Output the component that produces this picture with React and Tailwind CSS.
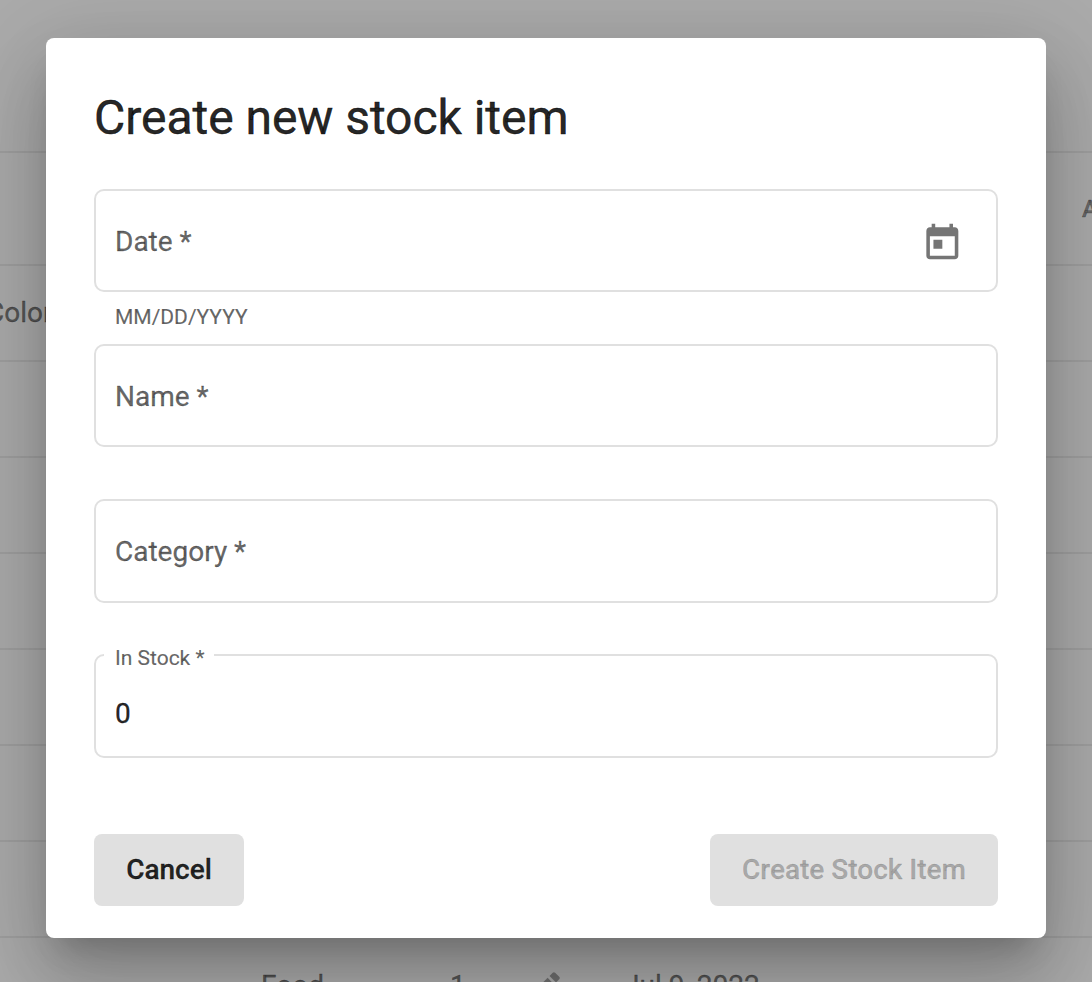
const middleRows = ["r2", "r3", "r4", "r5", "r6", "r7"];

function StockTable() {
  return (
    <div className="h-[982px] w-[1092px] overflow-hidden bg-[#fcfcfc] text-[28px] text-black/50">
      <div className="h-[153px] border-b-2 border-[#ebebeb]" />
      <div className="flex h-[113px] items-center justify-end border-b-2 border-[#ebebeb]">
        <span className="-mr-[6px] text-[24px] font-medium text-black/40 [-webkit-text-stroke:0.5px]">A</span>
      </div>
      <div className="flex h-24 items-center border-b-2 border-[#ebebeb] [-webkit-text-stroke:0.3px]">
        <span className="-ml-[14px]">Color</span>
      </div>
      {middleRows.map((row) => (
        <div key={row} className="h-24 border-b-2 border-[#ebebeb]" />
      ))}
      <div className="grid h-24 grid-cols-[189px_73px_101px_200px] items-center pl-[261px] [-webkit-text-stroke:0.3px]">
        <span>Food</span>
        <span>1</span>
        <svg viewBox="0 0 24 24" className="mt-[3px] h-[42px] w-[42px] fill-black/35 [-webkit-text-stroke:0]">
          <path d="M3 17.25V21h3.75L17.81 9.94l-3.75-3.75L3 17.25zM20.71 7.04c.39-.39.39-1.02 0-1.41l-2.34-2.34a.996.996 0 0 0-1.41 0l-1.83 1.83 3.75 3.75 1.83-1.83z" />
        </svg>
        <span>Jul 9, 2022</span>
      </div>
    </div>
  );
}

function Field({ label, tall, children }) {
  return (
    <div className={`flex items-center justify-between rounded-[10px] border-2 border-[#e0e0e0] pl-[19px] pr-[32.5px] ${tall ? "h-[104px] pt-px" : "h-[103px] pt-[2px]"}`}>
      <span className="text-[28px] leading-8 text-black/60 [-webkit-text-stroke:0.3px]">{label}</span>
      {children}
    </div>
  );
}

export default function App() {
  return (
    <div className="relative h-[982px] w-[1092px] overflow-hidden font-[Roboto,sans-serif]">
      <StockTable />
      <div className="absolute inset-0 bg-black/32 px-[46px] pt-[38px]">
        <div className="flex h-[900px] flex-col rounded-lg bg-white px-12 pb-8 pt-12 shadow-[0_22px_30px_-14px_rgba(0,0,0,0.2),0_48px_76px_6px_rgba(0,0,0,0.14),0_18px_92px_16px_rgba(0,0,0,0.12)]">
          <h1 className="h-[103px] text-[48px] leading-[64px] tracking-[-0.04px] text-black/87 [-webkit-text-stroke:0.5px]">
            Create new stock item
          </h1>
          <Field label="Date *">
            <svg viewBox="0 0 24 24" className="mt-1 h-[42.67px] w-[42.67px] fill-[#757575]">
              <path d="M19 3h-1V1h-2v2H8V1H6v2H5c-1.11 0-1.99.9-1.99 2L3 19c0 1.1.89 2 2 2h14c1.1 0 2-.9 2-2V5c0-1.1-.9-2-2-2zm0 16H5V8h14v11zM7 10h5v5H7z" />
            </svg>
          </Field>
          <div className="flex h-[52px] items-center pl-[21px] text-[21px] text-black/60 [-webkit-text-stroke:0.2px]">MM/DD/YYYY</div>
          <Field label="Name *" />
          <div className="h-[52px]" />
          <Field label="Category *" tall />
          <div className="h-[51px]" />
          <div className="relative flex h-[104px] items-center rounded-[10px] border-2 border-[#e0e0e0] pl-[19px] pt-[16px]">
            <span className="text-[28px] leading-8 text-black/87 [-webkit-text-stroke:0.3px]">0</span>
            <span className="absolute left-2 top-[-12px] w-[110px] bg-white pl-[11px] text-[21px] leading-[28px] text-black/60 [-webkit-text-stroke:0.2px]">In Stock *</span>
          </div>
          <div className="mt-auto flex justify-between">
            <button className="h-[72px] w-[150px] rounded-lg bg-[#e0e0e0] text-[28px] font-medium text-black/87 [-webkit-text-stroke:0.3px]">Cancel</button>
            <button className="h-[72px] w-[288px] rounded-lg bg-[#e0e0e0] text-[28px] font-medium text-black/26 [-webkit-text-stroke:0.3px]">Create Stock Item</button>
          </div>
        </div>
      </div>
    </div>
  );
}
